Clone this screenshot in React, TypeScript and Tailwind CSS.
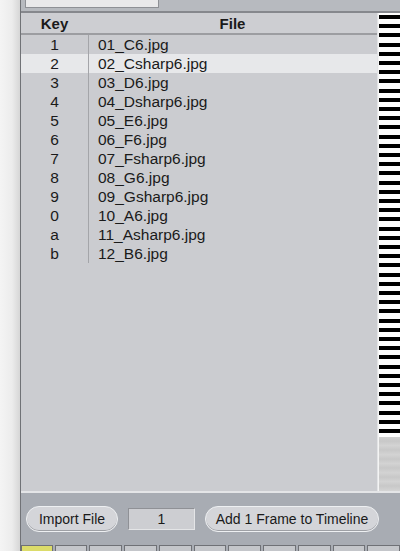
import React from "react";

const rows: [string, string][] = [
  ["1", "01_C6.jpg"],
  ["2", "02_Csharp6.jpg"],
  ["3", "03_D6.jpg"],
  ["4", "04_Dsharp6.jpg"],
  ["5", "05_E6.jpg"],
  ["6", "06_F6.jpg"],
  ["7", "07_Fsharp6.jpg"],
  ["8", "08_G6.jpg"],
  ["9", "09_Gsharp6.jpg"],
  ["0", "10_A6.jpg"],
  ["a", "11_Asharp6.jpg"],
  ["b", "12_B6.jpg"],
];

const font = { fontFamily: '"Liberation Sans", Arial, sans-serif' };

export default function App() {
  return (
    <div className="flex h-[551px] w-[400px] overflow-hidden bg-[#a9acb2] text-[#1a1a1a]" style={font}>
      {/* left desktop gutter */}
      <div className="w-[20px] shrink-0 bg-[linear-gradient(to_right,#f4f4f4,#ececec_60%,#d6d6d6)]" />

      <div className="flex min-w-0 flex-1 flex-col border-l border-[#707276]">
        {/* top bar */}
        <div className="flex h-[11px] shrink-0 items-start bg-[#b7babf] pl-[4px]">
          <div className="h-[8px] w-[134px] border border-t-0 border-[#8e9095] bg-[#e9e9ea]" />
        </div>
        <div className="h-[2px] shrink-0 bg-[#86888d]" />

        <div className="flex min-h-0 flex-1">
          {/* table */}
          <div className="flex min-w-0 flex-1 flex-col border-r border-[#e2e3e5] bg-[#cbccd0]">
            <div className="flex h-[22px] shrink-0 items-center border-b-2 border-[#9c9da1] bg-[#cdced2] pt-[2px] text-[15px] font-bold">
              <div className="w-[67px] text-center">Key</div>
              <div className="flex-1 text-center">File</div>
            </div>
            <div className="relative">
              <div className="absolute top-0 bottom-0 left-[67px] w-px bg-[#a4a5a9]" />
              {rows.map(([k, f], i) => (
                <div
                  key={f}
                  className={
                    i === 1
                      ? "flex h-[19px] items-center bg-[#e7e8ea] text-[15.5px]"
                      : "flex h-[19px] items-center text-[15.5px]"
                  }
                >
                  <div className="w-[67px] text-center">{k}</div>
                  <div className="pl-[10px]">{f}</div>
                </div>
              ))}
            </div>
          </div>

          {/* striped strip */}
          <div className="flex w-[22px] shrink-0 flex-col border-l border-[#f4f4f4]">
            <div className="h-[424px] bg-[repeating-linear-gradient(to_bottom,#ffffff_0px,#ffffff_2px,#000000_2px,#000000_6px,#ffffff_6px,#ffffff_9.2px)]" />
            <div className="flex-1 bg-[repeating-linear-gradient(to_bottom,#d2d2d2_0px,#c8c8c8_4px,#d4d4d4_9px)]" />
          </div>
        </div>

        {/* bottom panel */}
        <div className="flex h-[54px] shrink-0 items-center gap-[10px] border-t-2 border-[#e4e5e7] bg-[#a8acb3] pl-[5px] text-[14px]">
          <button className="h-[26px] w-[92px] rounded-full border border-[#eef0f2] bg-[#d4d5d9] shadow-[inset_0_-1px_0_#9ea0a5]">
            Import File
          </button>
          <div className="flex h-[22px] w-[67px] items-center justify-center border border-[#8f9196] border-b-[#e4e5e7] border-r-[#e4e5e7] bg-[#cdced2]">
            1
          </div>
          <button className="h-[26px] w-[174px] rounded-full border border-[#eef0f2] bg-[#d4d5d9] shadow-[inset_0_-1px_0_#9ea0a5]">
            Add 1 Frame to Timeline
          </button>
        </div>

        {/* timeline cells */}
        <div className="flex h-[6px] shrink-0 gap-[2px] bg-[#a8acb3]">
          <div className="w-[33px] border border-b-0 border-[#6f7176] bg-[#dcdc6a]" />
          {Array.from({ length: 10 }).map((_, i) => (
            <div key={i} className="w-[34px] border border-b-0 border-[#6f7176] bg-[#c4c6ca]" />
          ))}
        </div>
      </div>
    </div>
  );
}
